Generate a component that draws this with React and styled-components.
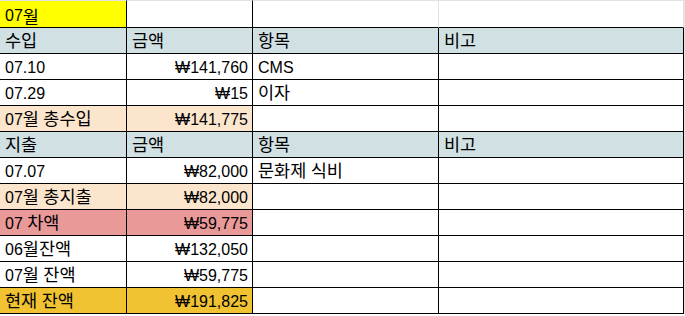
import React from 'react';
import styled, { createGlobalStyle } from 'styled-components';

const GlobalStyle = createGlobalStyle`
  body {
    margin: 0;
    background: #ffffff;
  }
`;

const fills = {
  none: '#ffffff',
  yellow: '#ffff00',
  header: '#d0e0e3',
  peach: '#fce5cd',
  red: '#ea9999',
  gold: '#f1c232',
};

const Sheet = styled.div`
  display: grid;
  grid-template-columns: 127px 126px 186px 245px 1px;
  grid-auto-rows: 26px;
  grid-template-rows: 28px;
  width: 685px;
  font-family: 'Liberation Sans', Arial, 'Noto Sans CJK KR', sans-serif;
  font-size: 16px;
  color: #000000;
`;

const Cell = styled.div`
  display: flex;
  align-items: flex-end;
  justify-content: ${(p) => (p.$right ? 'flex-end' : 'flex-start')};
  padding: 0 4px 2px 5px;
  line-height: 18px;
  white-space: pre;
  overflow: hidden;
  background: ${(p) => fills[p.$fill || 'none']};
  border-right: 1px solid ${(p) => (p.$soft ? '#e2e3e3' : '#000000')};
  border-bottom: 1px solid #000000;
  border-top: ${(p) => (p.$top ? '1px solid #e2e3e3' : 'none')};
`;

const Hangul = styled.span`
  font-family: 'Noto Sans CJK KR', sans-serif;
  font-size: 17.5px;
  line-height: 18px;
`;

const Gutter = styled.div`
  background: #e2e3e3;
`;

const rows = [
  { fill: 'header', cells: ['수입', '금액', '항목', '비고'] },
  { cells: ['07.10', '₩141,760', 'CMS', ''] },
  { cells: ['07.29', '₩15', '이자', ''] },
  { fill: 'peach', cells: ['07월 총수입', '₩141,775', '', ''] },
  { fill: 'header', cells: ['지출', '금액', '항목', '비고'] },
  { cells: ['07.07', '₩82,000', '문화제 식비', ''] },
  { fill: 'peach', cells: ['07월 총지출', '₩82,000', '', ''] },
  { fill: 'red', cells: ['07 차액', '₩59,775', '', ''] },
  { cells: ['06월잔액', '₩132,050', '', ''] },
  { cells: ['07월 잔액', '₩59,775', '', ''] },
  { fill: 'gold', cells: ['현재 잔액', '₩191,825', '', ''] },
];

const rowFill = (row, i) => {
  if (row.fill === 'header') return 'header';
  if (i < 2) return row.fill;
  return 'none';
};

// Korean glyphs render larger than the latin ones in the sheet
const Text = ({ children }) =>
  children
    .split(/([\uAC00-\uD7A3]+)/)
    .filter(Boolean)
    .map((part, i) =>
      /[\uAC00-\uD7A3]/.test(part) ? <Hangul key={i}>{part}</Hangul> : part
    );

const App = () => {
  return (
    <>
      <GlobalStyle />
      <Sheet>
        <Cell $fill="yellow" $top>
          <Text>07월</Text>
        </Cell>
        <Cell $top />
        <Cell $top $soft />
        <Cell $top $soft />
        <Gutter />
        {rows.map((row, r) => (
          <React.Fragment key={r}>
            {row.cells.map((text, i) => (
              <Cell
                key={i}
                $fill={rowFill(row, i)}
                $right={i === 1 && row.fill !== 'header'}
              >
                <span>
                  <Text>{text}</Text>
                </span>
              </Cell>
            ))}
            <Gutter />
          </React.Fragment>
        ))}
      </Sheet>
    </>
  );
};

export default App;
